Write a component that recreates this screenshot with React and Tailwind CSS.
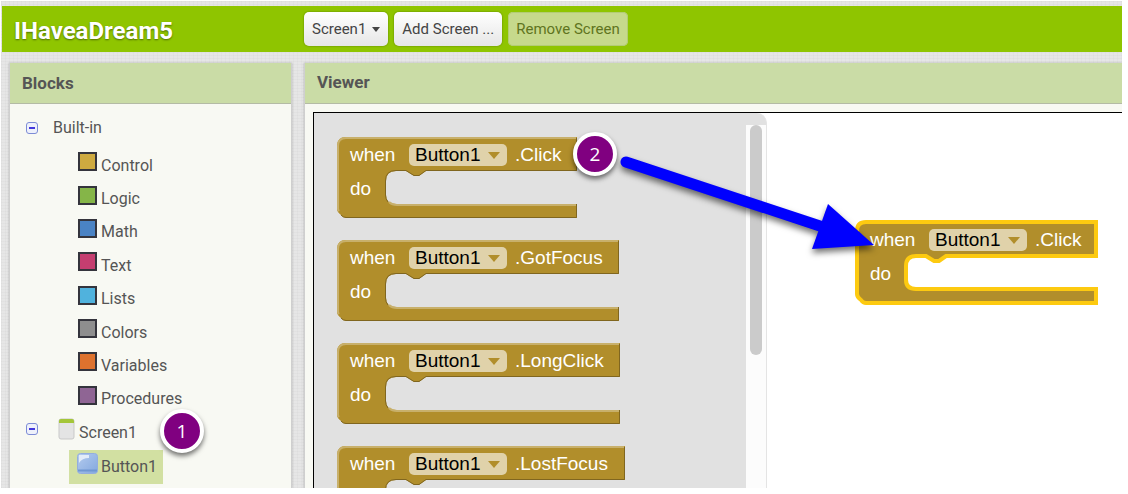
import React from "react";

const drawers = [
  { name: "Control", swatch: "bg-[#ceaa40]" },
  { name: "Logic", swatch: "bg-[#85b548]" },
  { name: "Math", swatch: "bg-[#4a83c4]" },
  { name: "Text", swatch: "bg-[#c53e70]" },
  { name: "Lists", swatch: "bg-[#50b2dd]" },
  { name: "Colors", swatch: "bg-[#8e8e8e]" },
  { name: "Variables", swatch: "bg-[#de722e]" },
  { name: "Procedures", swatch: "bg-[#8f6594]" },
];

const events = [
  { name: "Click", width: 240 },
  { name: "GotFocus", width: 282 },
  { name: "LongClick", width: 283 },
  { name: "LostFocus", width: 288 },
];

const linen =
  "bg-[#e6e6e6] bg-[repeating-linear-gradient(0deg,rgba(0,0,0,0.02)_0_1px,transparent_1px_3px),repeating-linear-gradient(90deg,rgba(0,0,0,0.02)_0_1px,transparent_1px_4px)]";

function EventBlock({ name, width, selected = false }) {
  const w = width;
  const outline = `M9 0 H${w} V34 H89 L82 39 H77 L69 34 H59 Q49 34 49 44 V58 Q49 67 59 67 H${w} V81 H9 Q6 81 4 78 Q0 75 0 72 V9 Q0 0 9 0 Z`;
  return (
    <div
      className="relative h-[81px] font-['Liberation_Sans',Arial,sans-serif] text-[19px] leading-[22px] text-white"
      style={{ width }}
    >
      <svg
        aria-hidden="true"
        className="absolute inset-0 overflow-visible"
        width={w}
        height="82"
        viewBox={`0 0 ${w} 82`}
        fill="none"
      >
        <path d={outline} fill="#b18e2b" />
        {selected ? (
          <path d={outline} stroke="#fdca10" strokeWidth="4" />
        ) : (
          <>
            <path
              d={`M2 74 Q1 73 1 72 V9 Q1 1 9 1 H${w - 1} M52 65 Q55 68 60 68 H${w - 1}`}
              stroke="#c8b06b"
              strokeWidth="2"
            />
            <path
              d={`M${w - 0.5} 1 V33.5 H89 L82 38.5 H77 L69 33.5 H59 Q48.5 33.5 48.5 44 V58 Q48.5 62 51 65 M${w - 0.5} 67 V80.5 H9 Q6 80.5 4 78`}
              stroke="#80661f"
              strokeWidth="1"
            />
          </>
        )}
      </svg>
      <div className="relative flex h-9 items-center pl-[13px]">
        <span className="w-[59px]">when</span>
        <span className="relative mr-2">
          <select
            aria-label={`Component for ${name}`}
            className="block h-[22px] w-[98px] appearance-none rounded-[5px] bg-[#e0d2aa] pl-[6px] leading-[22px] text-black"
            defaultValue="Button1"
          >
            <option>Button1</option>
          </select>
          <svg
            aria-hidden="true"
            className="pointer-events-none absolute top-2 right-[7px]"
            width="12"
            height="7"
          >
            <path d="M0 0 H12 L6 7 Z" fill="#b18e2b" />
          </svg>
        </span>
        <span>.{name}</span>
      </div>
      <div className="relative flex h-8 items-center pl-[13px]">do</div>
    </div>
  );
}

function Toggle({ label }) {
  return (
    <button
      type="button"
      aria-label={label}
      aria-expanded="true"
      className="flex size-3 items-center justify-center rounded-[3px] border border-[#7d8cd6] bg-[#eef1fb]"
    >
      <span className="h-[2px] w-[6px] bg-[#4338dc]" />
    </button>
  );
}

function Badge({ children, className }) {
  return (
    <span
      className={`absolute flex size-[44px] items-center justify-center rounded-full border-4 border-white bg-[#800080] font-['Open_Sans','Noto_Sans',sans-serif] text-[19px] leading-none text-white shadow-[0_3px_5px_rgba(0,0,0,0.55)] ${className}`}
    >
      {children}
    </span>
  );
}

function PanelTitle({ children }) {
  return (
    <h2 className="flex h-[41px] shrink-0 items-center border-b border-[#b4bba5] bg-[#cadca6] px-3 text-[17px] font-bold text-[#555]">
      {children}
    </h2>
  );
}

function Tree() {
  return (
    <ul className="pt-2">
      <li>
        <div className="mb-[5px] flex h-8 items-center gap-[15px] pl-4">
          <Toggle label="Collapse Built-in" />
          <span>Built-in</span>
        </div>
        <ul className="grid h-[267px] auto-rows-fr pl-[68px]">
          {drawers.map((d) => (
            <li key={d.name} className="flex items-center">
              <button type="button" className="flex items-center gap-1">
                <span
                  className={`mb-2 size-[19px] border-2 border-[#34343c] ${d.swatch}`}
                />
                <span>{d.name}</span>
              </button>
            </li>
          ))}
        </ul>
      </li>
      <li className="grid h-[68px] auto-rows-fr">
        <div className="relative flex items-center pl-4">
          <span className="mb-2">
            <Toggle label="Collapse Screen1" />
          </span>
          <button type="button" className="flex items-center gap-1 pl-5">
            <svg aria-hidden="true" className="mb-2" width="17" height="22">
              <rect x="1" y="1" width="15" height="20" rx="2" fill="#e4e4e4" stroke="#c9c9c9" />
              <path d="M1 5 V3 Q1 1 3 1 H14 Q16 1 16 3 V5 Z" fill="#a4c639" />
            </svg>
            <span>Screen1</span>
          </button>
          <Badge className="-top-[7px] left-[150px]">1</Badge>
        </div>
        <ul className="pl-[59px]">
          <li>
            <button
              type="button"
              className="flex h-[34px] items-center gap-[3px] bg-[#d2e0a2] pr-[6px] pl-2"
            >
              <svg aria-hidden="true" className="mb-2" width="21" height="21">
                <defs>
                  <linearGradient id="face" x1="0" y1="0" x2="1" y2="1">
                    <stop offset="0" stopColor="#b4cbee" />
                    <stop offset="1" stopColor="#83a8df" />
                  </linearGradient>
                </defs>
                <rect x="0.5" y="0.5" width="20" height="20" rx="3" fill="url(#face)" stroke="#94aede" />
                <path d="M2 2 H12 V5 Q5 5 2 10 Z" fill="#e3ecf9" />
                <path d="M1 17.5 H20" stroke="#6f97d3" strokeWidth="2" />
              </svg>
              <span>Button1</span>
            </button>
          </li>
        </ul>
      </li>
    </ul>
  );
}

function DragArrow() {
  return (
    <svg
      aria-hidden="true"
      className="pointer-events-none absolute top-[37px] left-[300px] overflow-visible drop-shadow-[0_4px_3px_rgba(0,0,0,0.55)]"
      width="260"
      height="100"
      fill="#0000fe"
    >
      <path d="M12 12 L212 78" stroke="#0000fe" strokeWidth="11" strokeLinecap="round" />
      <path d="M214 54 L198 99 L260 95 Z" />
    </svg>
  );
}

export default function App() {
  const toolButton = "h-[34px] rounded-[5px] px-2 text-[15px] text-[#444]";
  const raised =
    "bg-linear-to-b from-white to-[#e6e6e6] shadow-[0_0_2px_rgba(0,0,0,0.4)]";
  return (
    <div className="h-screen bg-white pt-px pr-[6px] pb-[6px] pl-px font-[Roboto,sans-serif] text-[#555]">
      <div className={`flex h-full flex-col overflow-hidden pt-[5px] pl-px ${linen}`}>
        <header className="flex h-[46px] shrink-0 items-center bg-[#8fc500] pl-3">
          <h1 className="w-[290px] pt-1 text-[24px] leading-none font-bold text-white [text-shadow:0_1px_2px_rgba(0,0,0,0.45)]">
            IHaveaDream5
          </h1>
          <div className="flex items-center">
            <button
              type="button"
              aria-haspopup="menu"
              className={`mr-[6px] flex items-center gap-[6px] ${toolButton} ${raised}`}
            >
              Screen1
              <svg aria-hidden="true" width="8" height="5">
                <path d="M0 0 H8 L4 5 Z" fill="#444" />
              </svg>
            </button>
            <button type="button" className={`mr-[6px] ${toolButton} ${raised}`}>
              Add Screen ...
            </button>
            <button
              type="button"
              disabled
              className="h-[34px] rounded-[5px] bg-[#c6d98c] px-2 text-[15px] text-[#5f7420] inset-ring inset-ring-[#b3cc74]"
            >
              Remove Screen
            </button>
          </div>
        </header>

        <div className="flex min-h-0 flex-1 gap-3 pt-[11px] pl-[7px]">
          <aside className="w-[283px] shrink-0 border-x border-[#cfcfcf] bg-[#f8f9f3] text-[16px] leading-5 shadow-[0_0_2px_rgba(0,0,0,0.25)]">
            <PanelTitle>Blocks</PanelTitle>
            <Tree />
          </aside>

          <main className="flex min-w-0 flex-1 flex-col border-l border-[#cfcfcf] bg-[#f8f9f3] shadow-[0_0_2px_rgba(0,0,0,0.25)]">
            <PanelTitle>Viewer</PanelTitle>
            <div className="flex min-h-0 flex-1 pt-2 pl-2">
              <div className="relative flex min-w-0 flex-1 overflow-hidden border-t border-l border-black bg-white">
                <div className="flex w-[453px] shrink-0 overflow-hidden rounded-tr-[10px] border-r border-[#e4e4e4] bg-[#e1e1e1]">
                  <div className="flex flex-1 flex-col gap-[22px] pt-6 pl-[23px]">
                    {events.map((e) => (
                      <div key={e.name} className="shrink-0">
                        <EventBlock name={e.name} width={e.width} />
                      </div>
                    ))}
                  </div>
                  <div className="mt-3 w-5 bg-[#fcfcfc] px-1">
                    <div className="h-[230px] rounded-full bg-[#cbcbcb]" />
                  </div>
                </div>
                <div className="absolute top-[109px] left-[543px]">
                  <EventBlock name="Click" width={239} selected />
                </div>
                <Badge className="top-[19px] left-[259px]">2</Badge>
                <DragArrow />
              </div>
            </div>
          </main>
        </div>
      </div>
    </div>
  );
}
